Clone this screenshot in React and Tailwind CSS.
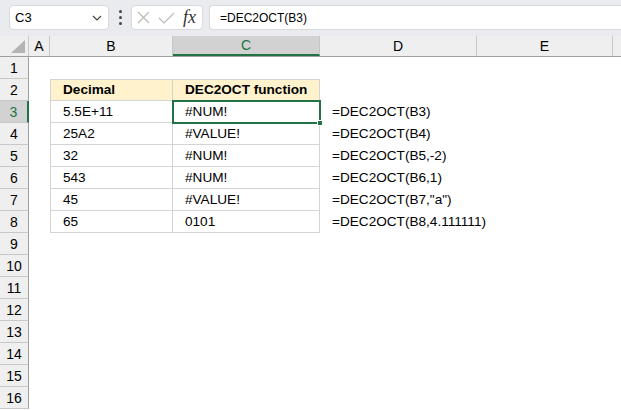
import React from "react";

const COLS = [
  { key: "A", w: "w-[21px]" },
  { key: "B", w: "w-[123px]" },
  { key: "C", w: "w-[147px]" },
  { key: "D", w: "w-[157px]" },
  { key: "E", w: "w-[136px]" },
  { key: "F", w: "w-[10px]" },
];

const data = {
  2: { B: "Decimal", C: "DEC2OCT function" },
  3: { B: "5.5E+11", C: "#NUM!", D: "=DEC2OCT(B3)" },
  4: { B: "25A2", C: "#VALUE!", D: "=DEC2OCT(B4)" },
  5: { B: "32", C: "#NUM!", D: "=DEC2OCT(B5,-2)" },
  6: { B: "543", C: "#NUM!", D: "=DEC2OCT(B6,1)" },
  7: { B: "45", C: "#VALUE!", D: "=DEC2OCT(B7,\"a\")" },
  8: { B: "65", C: "0101", D: "=DEC2OCT(B8,4.111111)" },
};

function Cell({ row, col }) {
  const inTable = row >= 2 && row <= 8 && (col.key === "B" || col.key === "C");
  const header = row === 2 && inTable;
  const text = data[row] ? data[row][col.key] : undefined;
  let cls = `${col.w} h-full shrink-0 flex items-center whitespace-nowrap overflow-visible pt-[1px]`;
  if (inTable) {
    cls += " border-r border-b border-[#d4d4d4]";
    if (col.key === "B") cls += " border-l";
    if (row === 2) cls += " border-t";
  }
  if (header) cls += " bg-[#fff2cc] font-bold";
  return (
    <div className={cls}>
      {text !== undefined && <span className="pl-[12px] text-black">{text}</span>}
    </div>
  );
}

export default function App() {
  const rows = Array.from({ length: 16 }, (_, i) => i + 1);
  return (
    <div
      className="w-[621px] h-[410px] overflow-hidden bg-white text-[13.6px] text-black"
      style={{ fontFamily: '"Liberation Sans", Arial, sans-serif' }}
    >
      {/* Toolbar */}
      <div className="h-[36px] bg-[#e9ebee] flex items-start pt-[5px] pl-[9px]">
        <div className="w-[100px] h-[25px] bg-white rounded-[4px] border border-[#d8dadd] flex items-center justify-between pl-[5px] pr-[6px]">
          <span className="text-[13px]">C3</span>
          <svg width="10" height="6" viewBox="0 0 10 6">
            <path d="M1 1 L5 5 L9 1" fill="none" stroke="#444" strokeWidth="1.2" />
          </svg>
        </div>
        <div className="w-[22px] h-[25px] flex flex-col items-center justify-center gap-[3px]">
          <div className="w-[3px] h-[3px] rounded-full bg-[#444]" />
          <div className="w-[3px] h-[3px] rounded-full bg-[#444]" />
          <div className="w-[3px] h-[3px] rounded-full bg-[#444]" />
        </div>
        <div className="w-[72px] h-[25px] bg-white rounded-[4px] border border-[#d8dadd] flex items-center pl-[5px] gap-[8px]">
          <svg width="13" height="13" viewBox="0 0 13 13">
            <path d="M1 1 L12 12 M12 1 L1 12" stroke="#b8b8b8" strokeWidth="1.1" fill="none" />
          </svg>
          <svg width="17" height="12" viewBox="0 0 17 12">
            <path d="M1 6 L6 11 L16 1" stroke="#b8b8b8" strokeWidth="1.1" fill="none" />
          </svg>
          <span
            className="italic text-[18px] text-[#333] leading-none -mt-[2px]"
            style={{ fontFamily: '"Liberation Serif", "Times New Roman", serif' }}
          >
            fx
          </span>
        </div>
        <div className="flex-1 ml-[6px] h-[25px] bg-white rounded-l-[4px] border border-r-0 border-[#d8dadd] flex items-center pl-[10px]">
          <span className="text-[12px]">=DEC2OCT(B3)</span>
        </div>
      </div>

      {/* Column headers */}
      <div className="flex h-[21px] bg-[#efefef] border-b border-[#9e9e9e] text-[14px]">
        <div className="w-[29px] shrink-0 h-full border-r border-[#c6c6c6] flex items-end justify-end pr-[3px] pb-[3px]">
          <svg width="14" height="13" viewBox="0 0 14 13">
            <path d="M14 0 L14 13 L0 13 Z" fill="#b4b4b4" />
          </svg>
        </div>
        {COLS.map((c) => (
          <div
            key={c.key}
            className={`${c.w} shrink-0 h-full flex items-center justify-center border-r border-[#c6c6c6] ${
              c.key === "C" ? "bg-[#d2d2d2] text-[#217346] border-b-2 border-b-[#217346]" : "text-black"
            } ${c.key === "F" ? "border-r-0" : ""}`}
          >
            {c.key !== "F" ? c.key : ""}
          </div>
        ))}
      </div>

      {/* Grid */}
      <div className="relative">
        {rows.map((r) => (
          <div key={r} className="flex h-[22px]">
            <div
              className={`w-[29px] shrink-0 h-full flex items-center justify-center border-b border-[#c8c8c8] text-[14px] pt-[1px] ${
                r === 3
                  ? "bg-[#d2d2d2] text-[#217346] border-r-2 border-r-[#217346]"
                  : "bg-[#efefef] border-r border-r-[#9e9e9e]"
              }`}
            >
              {r}
            </div>
            {COLS.map((c) => (
              <Cell key={c.key} row={r} col={c} />
            ))}
          </div>
        ))}
        {/* Selection box on C3 */}
        <div className="absolute left-[172px] top-[43px] w-[149px] h-[24px] border-2 border-[#217346] pointer-events-none" />
        <div className="absolute left-[317px] top-[63px] w-[6px] h-[6px] bg-[#217346] border border-white" />
      </div>
    </div>
  );
}
